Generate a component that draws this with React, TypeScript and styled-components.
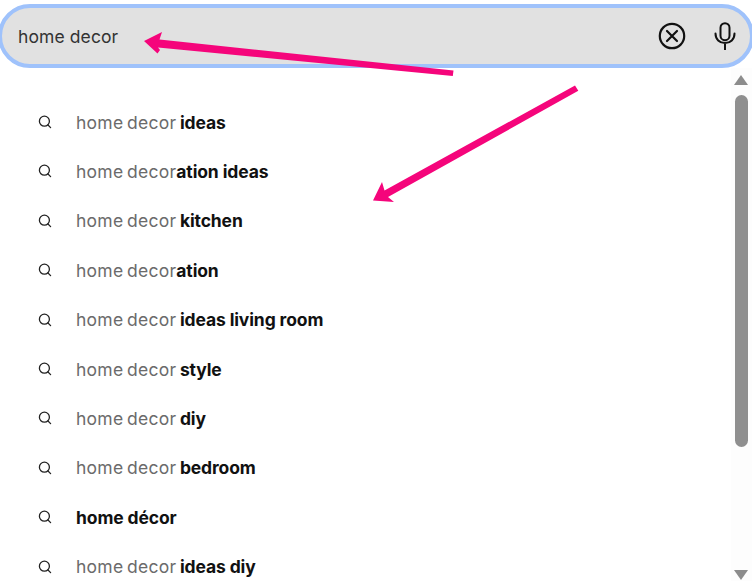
import React from 'react';
import styled, { createGlobalStyle } from 'styled-components';

const suggestions = [
    { typed: 'home decor ', rest: 'ideas' },
    { typed: 'home decor', rest: 'ation ideas' },
    { typed: 'home decor ', rest: 'kitchen' },
    { typed: 'home decor', rest: 'ation' },
    { typed: 'home decor ', rest: 'ideas living room' },
    { typed: 'home decor ', rest: 'style' },
    { typed: 'home decor ', rest: 'diy' },
    { typed: 'home decor ', rest: 'bedroom' },
    { typed: '', rest: 'home décor' },
    { typed: 'home decor ', rest: 'ideas diy' },
];

const SearchIcon = () => (
    <svg width="14" height="14" viewBox="0 0 14 14" fill="none" stroke="#222" strokeWidth="1.3" strokeLinecap="round">
        <circle cx="6.4" cy="6.2" r="5" />
        <path d="M10 10l2.6 2.6" />
    </svg>
);

const ClearIcon = () => (
    <svg width="28" height="28" viewBox="0 0 28 28" fill="none" stroke="#111" strokeWidth="2.2" strokeLinecap="round">
        <circle cx="14" cy="14" r="12.2" />
        <path d="M9 9l10 10M19 9L9 19" />
    </svg>
);

const MicIcon = () => (
    <svg width="22" height="28" viewBox="0 0 22 28" fill="none" stroke="#111" strokeWidth="2" strokeLinecap="round">
        <rect x="6.5" y="1.2" width="9" height="17" rx="4.5" />
        <path d="M1.5 11.5c0 5.8 4 9.5 9.5 9.5s9.500-3.700 9.500-9.500M11 21v6.500" />
    </svg>
);

export default function App() {
    return (
        <Page>
            <GlobalStyle />
            <SearchBar>
                <Query>home decor</Query>
                <BarActions>
                    <ClearIcon />
                    <MicIcon />
                </BarActions>
            </SearchBar>
            <Dropdown>
                <List>
                    {suggestions.map(item => (
                        <Row key={item.typed + item.rest}>
                            <SearchIcon />
                            <Label>
                                <Typed>{item.typed}</Typed>
                                <strong>{item.rest}</strong>
                            </Label>
                        </Row>
                    ))}
                </List>
                <Scrollbar>
                    <ArrowUp />
                    <Thumb />
                    <ArrowDown />
                </Scrollbar>
            </Dropdown>
            <Annotations width="752" height="581" viewBox="0 0 752 581">
                <path fill="#f5057b" d="M453.500 70.500L452.800 76L158 47.500L160 50L157.500 53.500L144 41L162 32L159.500 39.500z" />
                <path fill="#f5057b" d="M575 85.500L578.300 90.800L388 197L394 202L373 200.500L382 182L384.500 190.500z" />
            </Annotations>
        </Page>
    );
}

const GlobalStyle = createGlobalStyle`
    html, body {
        margin: 0;
        padding: 0;
        background: #fff;
    }
`;

const Page = styled.div`
    position: relative;
    width: 752px;
    height: 581px;
    overflow: hidden;
    padding-top: 4px;
    box-sizing: border-box;
    font-family: Inter, "Liberation Sans", sans-serif;
`;

const SearchBar = styled.div`
    display: flex;
    align-items: center;
    justify-content: space-between;
    box-sizing: border-box;
    width: 756px;
    height: 64px;
    margin-left: -2px;
    padding: 0 14px 0 20px;
    background: #e1e1e1;
    border: 4px solid #9fc2fb;
    border-radius: 32px;
`;

const Query = styled.span`
    font-size: 17.5px;
    letter-spacing: 0.1px;
    color: #333;
    margin-left: -4px;
`;

const BarActions = styled.div`
    display: flex;
    align-items: center;
    gap: 28px;
`;

const Dropdown = styled.div`
    display: flex;
    height: 514px;
`;

const List = styled.div`
    flex: 1;
    display: flex;
    flex-direction: column;
    padding-top: 29.4px;
    padding-left: 38px;
`;

const Row = styled.div`
    display: flex;
    align-items: center;
    gap: 24px;
    height: 49.4px;
    flex-shrink: 0;
`;

const Label = styled.span`
    font-size: 17.5px;
    white-space: pre;

    strong {
        font-weight: 700;
        letter-spacing: -0.12px;
        color: #111;
    }
`;

const Typed = styled.span`
    color: #6b6b6b;
    letter-spacing: 0.26px;
    word-spacing: -1.6px;
`;

const Scrollbar = styled.div`
    width: 21px;
    display: flex;
    flex-direction: column;
    align-items: center;
    background: #fdfdfd;
    padding: 7px 4px 0 0;
    box-sizing: border-box;
`;

const ArrowUp = styled.div`
    width: 0;
    height: 0;
    border-left: 7px solid transparent;
    border-right: 7px solid transparent;
    border-bottom: 10px solid #8c8c8c;
    margin-left: 3px;
`;

const Thumb = styled.div`
    width: 13px;
    height: 352px;
    margin-top: 10px;
    margin-left: 3px;
    background: #8f8f8f;
    border-radius: 7px;
`;

const ArrowDown = styled.div`
    width: 0;
    height: 0;
    border-left: 7px solid transparent;
    border-right: 7px solid transparent;
    border-top: 10px solid #8c8c8c;
    margin-left: 3px;
    margin-top: 123px;
`;

const Annotations = styled.svg`
    position: absolute;
    top: 0;
    left: 0;
    pointer-events: none;
`;
